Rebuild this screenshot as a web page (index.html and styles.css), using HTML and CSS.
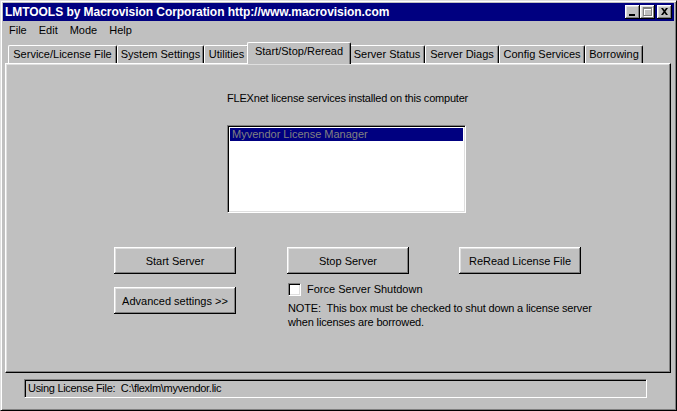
FILE: index.html
```html
<!DOCTYPE html>
<html>
<head>
<meta charset="utf-8">
<title>LMTOOLS</title>
<link rel="stylesheet" href="styles.css">
</head>
<body>
<div class="window">
  <div class="titlebar">
    <span class="title">LMTOOLS by Macrovision Corporation http://www.macrovision.com</span>
    <div class="tbtns">
      <span class="tbtn"><svg width="15" height="14" viewBox="0 0 15 14"><rect x="4" y="9" width="6" height="2" fill="#000"/></svg></span>
      <span class="tbtn"><svg width="15" height="14" viewBox="0 0 15 14"><path d="M4 3h9v9H4zM5 5v6h7V5z" fill="#fff"/><path d="M3 2h9v9H3zM4 4v6h7V4z" fill="#808080"/></svg></span>
      <span class="tbtn gap"><svg width="15" height="14" viewBox="0 0 15 14"><path d="M4 3h2l1.5 2 1.5-2h2L8.5 6.5 11 10H9L7.5 8 6 10H4l2.5-3.5z" fill="#000"/></svg></span>
    </div>
  </div>
  <div class="menubar">
    <span class="menu">File</span>
    <span class="menu">Edit</span>
    <span class="menu">Mode</span>
    <span class="menu">Help</span>
  </div>
  <div class="tabs">
    <div class="tab t1">Service/License File</div>
    <div class="tab t2">System Settings</div>
    <div class="tab t3">Utilities</div>
    <div class="tab t4 active">Start/Stop/Reread</div>
    <div class="tab t5">Server Status</div>
    <div class="tab t6">Server Diags</div>
    <div class="tab t7">Config Services</div>
    <div class="tab t8">Borrowing</div>
  </div>
  <div class="panel">
    <div class="caption">FLEXnet license services installed on this computer</div>
    <div class="listbox">
      <div class="item selected">Myvendor License Manager</div>
    </div>
    <div class="row1">
      <button class="btn">Start Server</button>
      <button class="btn">Stop Server</button>
      <button class="btn">ReRead License File</button>
    </div>
    <div class="row2">
      <button class="btn adv">Advanced settings &gt;&gt;</button>
      <div class="stopcol">
        <div class="check"><span class="box"></span><span>Force Server Shutdown</span></div>
        <p class="note">NOTE:&nbsp; This box must be checked to shut down a license server<br>when licenses are borrowed.</p>
      </div>
    </div>
  </div>
  <div class="statusarea">
    <div class="status">Using License File:&nbsp; C:\flexlm\myvendor.lic</div>
  </div>
</div>
</body>
</html>
```

FILE: styles.css
```css
html, body {
  margin: 0;
  padding: 0;
}
body {
  width: 677px;
  height: 411px;
  overflow: hidden;
  background: #c0c0c0;
  font-family: "Liberation Sans", Arial, sans-serif;
  font-size: 11px;
  color: #000;
}
.window {
  box-sizing: border-box;
  width: 677px;
  height: 411px;
  background: #c0c0c0;
  border: 1px solid;
  border-color: #dfdfdf #000 #000 #dfdfdf;
  box-shadow: inset 1px 1px #fff, inset -1px -1px #808080;
  padding: 2px;
  display: flex;
  flex-direction: column;
}
.titlebar {
  height: 18px;
  background: #000080;
  display: flex;
  align-items: center;
  padding: 0 2px 0 2px;
  color: #fff;
}
.title {
  font-weight: bold;
  font-size: 12px;
  white-space: nowrap;
  letter-spacing: -0.05px;
}
.tbtns {
  margin-left: auto;
  display: flex;
}
.tbtn {
  width: 15px;
  height: 14px;
  background: #c0c0c0;
  box-shadow: inset -1px -1px #000, inset 1px 1px #fff, inset -2px -2px #808080, inset 2px 2px #dfdfdf;
  display: block;
}
.tbtn svg {
  display: block;
}
.tbtn.gap {
  margin-left: 2px;
}
.menubar {
  height: 19px;
  display: flex;
  align-items: center;
}
.menu {
  padding: 0 6px;
  line-height: 13px;
}
.tabs {
  height: 23px;
  display: flex;
  align-items: flex-end;
  padding-left: 5px;
}
.tab {
  box-sizing: border-box;
  height: 18px;
  border-top: 1px solid #fff;
  border-left: 1px solid #fff;
  border-right: 1px solid #000;
  border-top-left-radius: 2px;
  border-top-right-radius: 2px;
  box-shadow: inset -1px 0 #808080;
  text-align: center;
  line-height: 17px;
  white-space: nowrap;
}
.t1 { width: 109px; }
.t2 { width: 87px; }
.t3 { width: 45px; }
.t4 { width: 100px; }
.t5 { width: 76px; }
.t6 { width: 74px; }
.t7 { width: 86px; }
.t8 { width: 58px; }
.tab.active {
  position: relative;
  z-index: 1;
  height: 22px;
  width: 104px;
  margin: 0 -2px -1px -2px;
  background: #c0c0c0;
  line-height: 17px;
  padding-bottom: 4px;
}
.panel {
  box-sizing: border-box;
  height: 310px;
  margin: 0 3px 0 2px;
  border: 1px solid;
  border-color: #fff #000 #000 #fff;
  box-shadow: inset -1px -1px #808080, inset 1px 1px #dfdfdf;
  padding-top: 28px;
  display: flex;
  flex-direction: column;
}
.caption {
  margin-left: 221px;
  line-height: 13px;
  white-space: nowrap;
  letter-spacing: -0.2px;
}
.listbox {
  box-sizing: border-box;
  margin: 20px 0 0 221px;
  width: 239px;
  height: 88px;
  background: #fff;
  border: 1px solid;
  border-color: #808080 #fff #fff #808080;
  box-shadow: inset 1px 1px #000, inset -1px -1px #dfdfdf;
  padding: 2px 2px;
}
.item {
  height: 13px;
  line-height: 13px;
  padding-left: 2px;
  white-space: nowrap;
}
.item.selected {
  background: #000080;
  color: #808080;
}
.row1 {
  margin: 34px 0 0 108px;
  display: flex;
}
.btn {
  box-sizing: border-box;
  width: 122px;
  height: 27px;
  margin: 0;
  padding: 0;
  border: none;
  background: #c0c0c0;
  box-shadow: inset -1px -1px #000, inset 1px 1px #fff, inset -2px -2px #808080, inset 2px 2px #dfdfdf;
  font-family: "Liberation Sans", Arial, sans-serif;
  font-size: 11px;
  color: #000;
  text-align: center;
}
.row1 .btn:nth-child(2) {
  margin-left: 51px;
}
.row1 .btn:nth-child(3) {
  margin-left: 50px;
}
.row2 {
  margin: 9px 0 0 108px;
  display: flex;
  align-items: flex-start;
}
.btn.adv {
  margin-top: 4px;
}
.stopcol {
  margin-left: 51px;
  padding-left: 1px;
}
.check {
  display: flex;
  align-items: center;
  height: 13px;
  line-height: 13px;
  white-space: nowrap;
}
.box {
  box-sizing: border-box;
  width: 13px;
  height: 13px;
  background: #fff;
  border: 1px solid;
  border-color: #808080 #fff #fff #808080;
  box-shadow: inset 1px 1px #000, inset -1px -1px #dfdfdf;
  margin-right: 6px;
}
.note {
  margin: 5px 0 0 0;
  line-height: 14px;
  white-space: nowrap;
  letter-spacing: -0.15px;
}
.statusarea {
  padding: 6px 27px 0 21px;
}
.status {
  box-sizing: border-box;
  height: 19px;
  border: 1px solid;
  border-color: #808080 #fff #fff #808080;
  box-shadow: inset 1px 1px #000;
  padding-left: 3px;
  line-height: 17px;
  white-space: nowrap;
  letter-spacing: -0.3px;
}
```
